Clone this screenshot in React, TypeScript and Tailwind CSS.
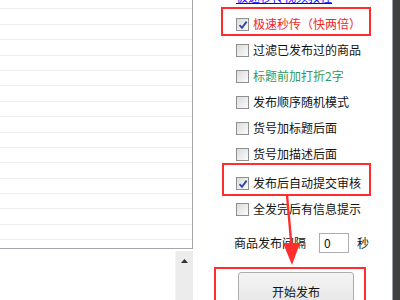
import React from "react";

function Box({ checked }: { checked?: boolean }) {
  return (
    <div className="relative w-[13px] h-[13px] shrink-0 border border-[#8e8f8f] bg-gradient-to-br from-[#dcdcdc] to-[#fbfbfb]">
      {checked && (
        <svg className="absolute left-[1px] top-[1px]" width="10" height="10" viewBox="0 0 10 10">
          <path d="M1.5 5.2 L4 7.8 L8.6 1.6" fill="none" stroke="#2b46a8" strokeWidth="1.8" />
        </svg>
      )}
    </div>
  );
}

function Row({ label, color, checked, extra }: { label: string; color: string; checked?: boolean; extra?: string }) {
  return (
    <div className={`flex items-center h-[26px] gap-[4px] ${extra ?? ""}`}>
      <Box checked={checked} />
      <span className={`text-[12px] leading-[14px] whitespace-nowrap ${color}`}>{label}</span>
    </div>
  );
}

export default function App() {
  const rows = Array.from({ length: 16 });
  return (
    <div
      className="relative flex w-[400px] h-[300px] overflow-hidden bg-white"
      style={{ fontFamily: '"Noto Sans CJK SC", "Noto Sans", sans-serif' }}
    >
      {/* left column */}
      <div className="flex flex-col w-[193px] shrink-0">
        <div className="h-[249px] border-r border-b border-[#a3a6ad] overflow-hidden flex flex-col">
          <div className="h-[9.4px] shrink-0 border-b border-[#eeeeee]" />
          {rows.map((_, i) => (
            <div key={i} className="h-[15.4px] shrink-0 border-b border-[#eeeeee]" />
          ))}
        </div>
        <div className="h-[2px]" />
        <div className="flex-1 flex justify-end">
          <div className="w-[18px] bg-[#ececec] border-l border-[#f4f4f4] flex justify-center pt-[8px]">
            <svg width="7" height="4" viewBox="0 0 7 4">
              <path d="M0 4 L3.5 0 L7 4 Z" fill="#333" />
            </svg>
          </div>
        </div>
      </div>

      {/* right panel */}
      <div className="relative flex-1 flex flex-col pl-[43px]">
        <div className="mt-[-10px] h-[14px] pl-[0px] text-[12px] leading-[14px] text-[#0000ff] underline whitespace-nowrap">
          极速秒传视频教程
        </div>
        <div className="mt-[7px] flex flex-col">
          <Row label="极速秒传（快两倍）" color="text-[#f02828]" checked />
          <Row label="过滤已发布过的商品" color="text-[#111]" />
          <Row label="标题前加打折2字" color="text-[#2f9a5c]" />
          <Row label="发布顺序随机模式" color="text-[#111]" />
          <Row label="货号加标题后面" color="text-[#111]" />
          <Row label="货号加描述后面" color="text-[#111]" />
          <Row label="发布后自动提交审核" color="text-[#111]" checked extra="mt-[3px]" />
          <Row label="全发完后有信息提示" color="text-[#111]" />
        </div>
        <div className="mt-[11px] ml-[-2px] flex items-center h-[20px]">
          <span className="text-[12px] leading-[14px] text-[#111] whitespace-nowrap">商品发布间隔</span>
          <div className="ml-[13px] w-[30px] h-[20px] border border-[#abadb3] bg-white flex items-center pl-[4px] text-[12px] leading-[14px] text-[#111]">
            0
          </div>
          <span className="ml-[8px] text-[12px] leading-[14px] text-[#111]">秒</span>
        </div>
        <div className="mt-[19px] ml-[2px] w-[116px] h-[40px] shrink-0 rounded-[3px] border border-[#adadad] bg-gradient-to-b from-[#f4f4f4] to-[#e4e4e4] flex items-center justify-center text-[12px] leading-[14px] text-[#111]">
          开始发布
        </div>
      </div>

      {/* dark edge */}
      <div className="w-[8px] shrink-0 border-l border-[#9ea2ab] bg-[#3f3f3f]" />

      {/* annotations */}
      <div className="absolute left-[221px] top-[7px] w-[150px] h-[29px] border-2 border-[#ff2e2e]" />
      <div className="absolute left-[222px] top-[163px] w-[149px] h-[33px] border-2 border-[#ff2e2e]" />
      <div className="absolute left-[214px] top-[267px] w-[152px] h-[40px] border-2 border-[#ff2e2e]" />
      <svg className="absolute left-[280px] top-[194px]" width="24" height="74" viewBox="0 0 24 74">
        <path d="M7 1 L11.5 52" stroke="#ff2e2e" strokeWidth="2.4" fill="none" />
        <path d="M3 49 L20 49 L12 71 Z" fill="#ff2e2e" />
      </svg>
    </div>
  );
}
